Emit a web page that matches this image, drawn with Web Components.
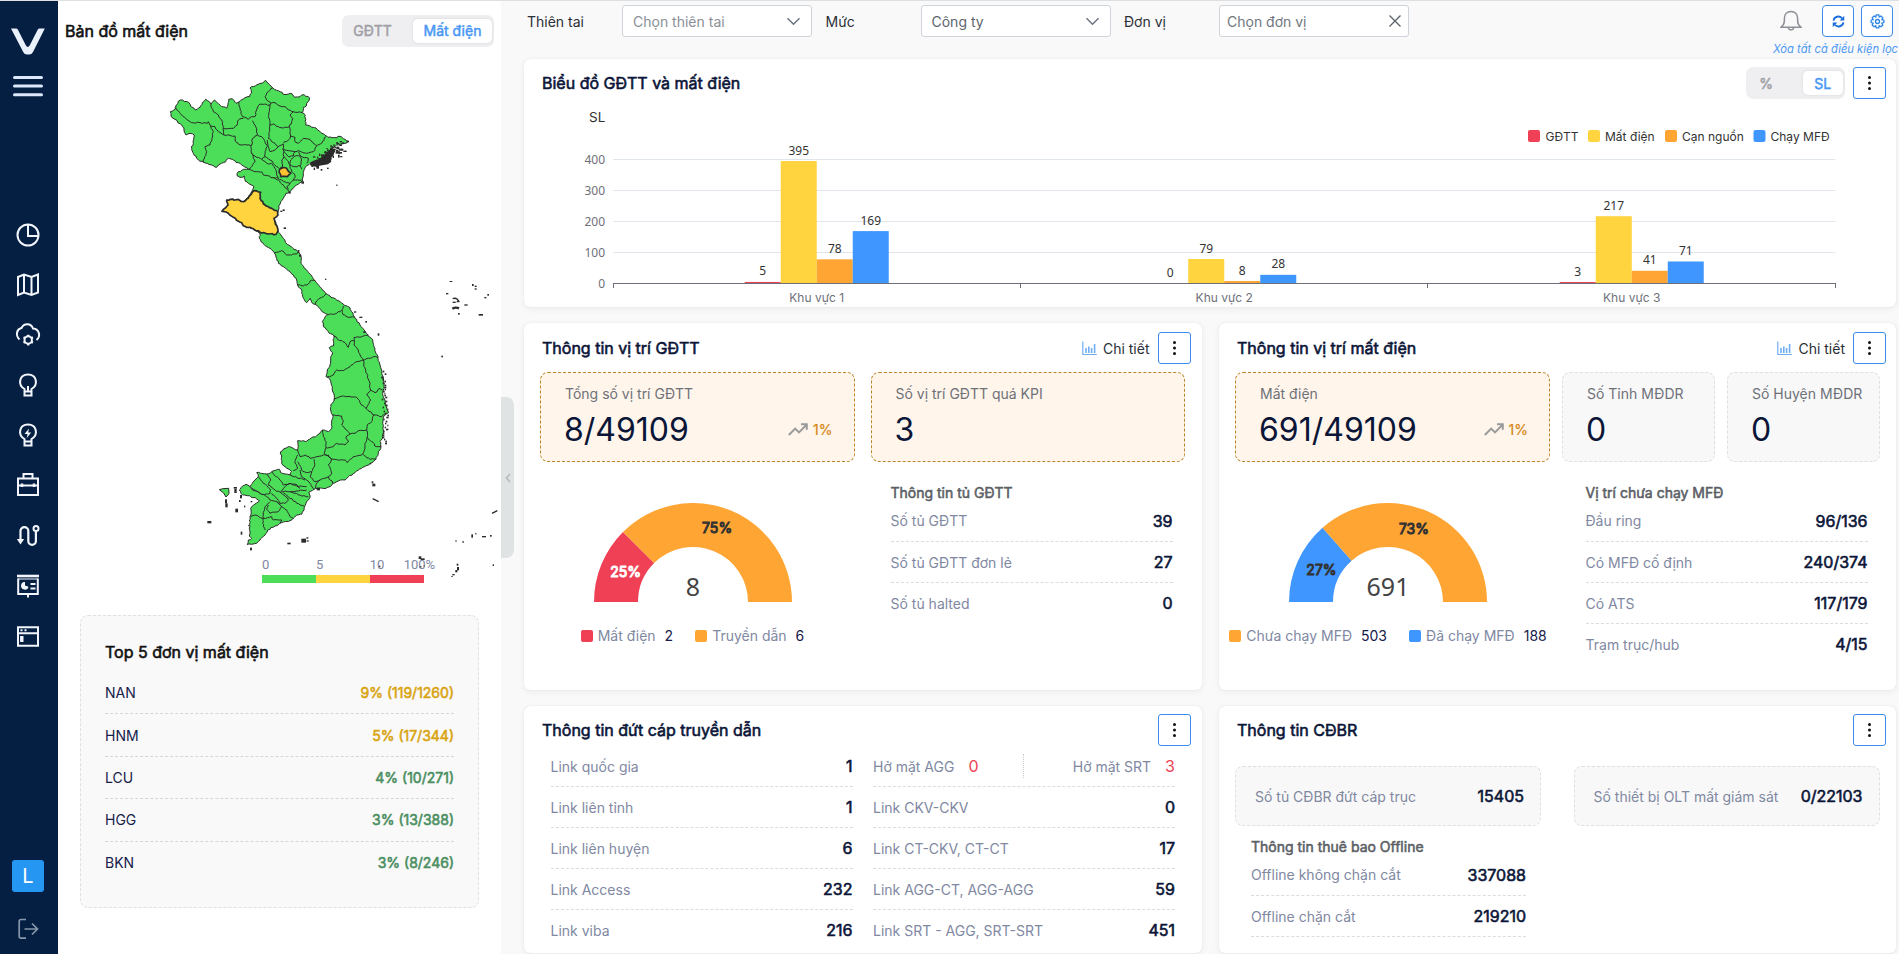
<!DOCTYPE html>
<html lang="vi">
<head>
<meta charset="utf-8">
<title>Dashboard</title>
<style>
html,body{margin:0;height:100%;overflow:hidden}
body{font-family:Inter,"Noto Sans",sans-serif;font-size:14px;color:#212529;background:#f9f9f9;font-optical-sizing:none}
</style>
</head>
<body>
<app-shell></app-shell>
<script>
const define = (name, css, html, after) => customElements.define(name, class extends HTMLElement {
  constructor(){ super(); this.attachShadow({mode:'open'}); }
  connectedCallback(){
    const a = n => this.getAttribute(n) ?? '';
    this.shadowRoot.innerHTML = `<style>:host{display:block;box-sizing:border-box}*{box-sizing:border-box}${css}</style>` + (typeof html === 'function' ? html(a, this) : html);
    if (after) after(this);
  }
});

/* ---------- small controls ---------- */
define('dots-button', `
  :host{width:33px;height:32px;flex:none;border:1px solid #3b8ce8;border-radius:3px;background:#fff;display:flex;align-items:center;justify-content:center}
  svg{display:block}`,
  `<svg width="5" height="16" viewBox="0 0 5 16" fill="#111"><circle cx="2.5" cy="2.4" r="1.5"/><circle cx="2.5" cy="8" r="1.5"/><circle cx="2.5" cy="13.6" r="1.5"/></svg>`);

define('seg-toggle', `
  :host{height:32px;flex:none;border-radius:7px;background:#efeff2;display:flex;padding:4px 2px 4px 0;font-size:14px;-webkit-text-stroke:.5px}
  span{display:flex;align-items:center;justify-content:center;height:24px}
  .off{color:#a0a0a5;flex:none}
  .on{flex:1;background:#fff;border-radius:5px;color:#4a98f5;box-shadow:0 0 3px rgba(0,0,0,.1)}`,
  a => `<span class="off" style="width:${a('off-width')}px;padding-right:${a('shift')}px">${a('off')}</span><span class="on">${a('on')}</span>`);

define('filter-field', `
  :host{display:flex;align-items:center;width:298.5px;flex:none}
  label{width:95px;flex:none;color:#2b2f36}
  div{width:190px;height:32px;border:1px solid #ced4da;border-radius:3px;background:#fff;display:flex;align-items:center;justify-content:space-between;padding:0 10px}
  .ph{color:#8b9098}.v{color:#5d646d}
  svg{display:block;flex:none}`,
  a => `<label>${a('label')}</label><div style="padding-left:${a('pad')||10}px;padding-right:${a('icon')==='x'?6:10}px"><span class="${a('value')?'v':'ph'}" style="${a('tone')?'color:'+a('tone'):''};padding-top:${a('value')?0:1}px">${a('value')||a('placeholder')}</span>${
    a('icon')==='x'
    ? `<svg width="14" height="14" viewBox="0 0 14 14" stroke="#5d646d" stroke-width="1.4"><path d="M1.5 1.5l11 11M12.5 1.5l-11 11"/></svg>`
    : `<svg width="15" height="9" viewBox="0 0 15 9" fill="none" stroke="#6b7480" stroke-width="1.5"><path d="M1.5 1.2l6 6 6-6"/></svg>`}</div>`);

define('icon-button', `
  :host{width:32px;height:32px;border:1px solid #3b8ce8;border-radius:4px;background:#fff;display:flex;align-items:center;justify-content:center}`,
  `<slot></slot>`);

define('data-row', `
  :host{display:flex;align-items:center;justify-content:space-between;height:41px;border-bottom:1px dashed #dcdcdc;color:#8088a2}
  :host([last]){border-bottom-color:transparent}
  b{font-weight:400;font-size:16px;color:#0b1537;-webkit-text-stroke:.6px}`,
  a => `<span>${a('label')}</span><b>${a('value')}</b>`);

define('rank-row', `
  :host{display:flex;align-items:center;justify-content:space-between;height:42.4px;border-bottom:1px dashed #d6d6d6;color:#16204a}
  :host([last]){border-bottom-color:transparent}
  b{font-weight:400;-webkit-text-stroke:.6px}`,
  a => `<span>${a('label')}</span><b style="color:${a('color')}">${a('value')}</b>`);

define('stat-box', `
  :host{height:90px;border:1px dashed #dfdfdf;border-radius:8px;background:#f8f8f8;padding:12px 21px 0 24px}
  :host([warm]){background:#fff5eb;border-color:#b9862a}
  p{margin:0;color:#6e7178;line-height:18px;white-space:nowrap}
  div{display:flex;justify-content:space-between;align-items:center;height:40px;margin-top:6px}
  .n{font-size:32px;color:#0b1537;margin-left:-1px}
  .t{display:flex;align-items:center;gap:5px;color:#d58512;-webkit-text-stroke:.2px;margin-top:1px}`,
  a => `<p>${a('label')}</p><div><span class="n">${a('value')}</span>${a('trend')?`<span class="t"><svg width="20" height="13" viewBox="0 0 20 13" fill="none" stroke="#9a9a9a" stroke-width="2"><path d="M.8 12l6.4-6.4 3.8 3.8 7.5-7.6M13 1.2h5.8v5.6"/></svg>${a('trend')}</span>`:''}</div>`);

define('detail-link', `
  :host{display:flex;align-items:center;gap:6px;color:#2b2f36}
  svg{display:block}`,
  `<svg width="15" height="15" viewBox="0 0 15 15" fill="none" stroke="#6fadf4" stroke-width="1.2"><path d="M.8 .5v13h14"/><path stroke-width="1.6" d="M4 12V7M6.800 12V5.500M9.600 12V7M12.600 12V3"/></svg><span>Chi tiết</span>`);

define('panel-card', `
  :host{background:#fff;border-radius:6px;box-shadow:0 2px 6px rgba(40,50,90,.06),0 0 1px rgba(40,50,90,.18)}
  header{display:flex;align-items:center;height:50px;padding:var(--head-pad,0) 11px var(--head-drop,0) 18px}
  h2{margin:0;flex:1;font-size:16px;font-weight:400;color:#0b1537;-webkit-text-stroke:.6px}
  dots-button{margin-right:var(--dots-shift,0)}
  ::slotted([slot=tools]){margin-right:8px}`,
  a => `<header><h2>${a('heading')}</h2><slot name="tools"></slot><dots-button></dots-button></header><slot></slot>`);

/* ---------- charts ---------- */
define('bar-chart', `svg{display:block}text{font-size:12px}.num{font-family:"Noto Sans",sans-serif}`, () => {
  const X0=613, W=407.5, Y0=283.5, K=.31;
  const colors=['#ef4056','#ffd43f','#ffa533','#3f96ff'];
  const groups=[[5,395,78,169],[0,79,8,28],[3,217,41,71]];
  let s='';
  for(let i=0;i<=4;i++){
    const y=Y0-i*31;
    if(i) s+=`<path d="M${X0} ${y}H1835.5" stroke="#e0e6ec"/>`;
    s+=`<text class="num" x="605" y="${y+4.5}" text-anchor="end" fill="#6e7079">${i*100}</text>`;
  }
  groups.forEach((g,i)=>{
    const c=X0+W*(i+.5);
    g.forEach((v,j)=>{
      const x=c-72+36*j, h=v?Math.max(v*K,1.5):0;
      s+=`<rect x="${x}" y="${Y0-h}" width="36" height="${h}" fill="${colors[j]}"/>`;
    });
    g.forEach((v,j)=>{
      s+=`<text class="num" x="${c-54+36*j}" y="${Y0-v*K-6.500}" text-anchor="middle" fill="#333">${v}</text>`;
    });
    s+=`<text x="${c}" y="302" text-anchor="middle" fill="#6e7079">Khu vực ${i+1}</text>`;
  });
  s+=`<path d="M${X0} ${Y0}H1835.5M613.5 283v5M1020.5 283v5M1427.5 283v5M1835.5 283v5" stroke="#6e7079" fill="none"/>`;
  s+=`<text x="589" y="122" style="font-size:13.5px" fill="#333">SL</text>`;
  [['GĐTT',1528,1545.5],['Mất điện',1588,1605],['Cạn nguồn',1665,1682],['Chạy MFĐ',1753.5,1770.5]].forEach(([t,x,tx],i)=>{
    s+=`<rect x="${x}" y="130" width="12" height="12" rx="2" fill="${colors[i]}"/><text x="${tx}" y="141" fill="#333">${t}</text>`;
  });
  return `<svg width="1372" height="197" viewBox="524 109 1372 197">${s}</svg>`;
});

define('half-donut', `
  svg{display:block;margin:0 auto}
  .p{font-size:14px;-webkit-text-stroke:.5px}.c{font-family:"Noto Sans",sans-serif;font-size:25px;fill:#444}`, a => {
  const [c1,c2]=a('colors').split(','), pct=+a('percent'), t=Math.PI*(1-pct/100), C=99;
  const pt=(r,ang)=>`${C+r*Math.cos(ang)} ${C-r*Math.sin(ang)}`;
  const seg=(a0,a1,f)=>`<path d="M${pt(99,a0)}A99 99 0 0 1 ${pt(99,a1)}L${pt(55,a1)}A55 55 0 0 0 ${pt(55,a0)}Z" fill="${f}"/>`;
  const m1=(Math.PI+t)/2, m2=t/2;
  return `<svg width="198" height="99" viewBox="0 0 198 99">${seg(Math.PI,t,c1)}${seg(t,0,c2)}
   <text class="p" text-anchor="middle" x="${C+73*Math.cos(m1)}" y="${C-75*Math.sin(m1)+4}" fill="${a('ink')}" stroke="${a('ink')}">${pct}%</text>
   <text class="p" text-anchor="middle" x="${C+63*Math.cos(m2)}" y="${C-84*Math.sin(m2)+9}" fill="#333" stroke="#333">${100-pct}%</text>
   <text class="c" text-anchor="middle" x="99" y="93">${a('total')}</text></svg>`;
});

define('color-legend', `
  :host{display:flex;justify-content:center;gap:22px}
  span{display:flex;align-items:center;color:#8088a2;white-space:nowrap}
  i{width:12px;height:12px;border-radius:2px;margin-right:5px}
  b{font-weight:400;color:#16204a;margin-left:9px}`,
  a => a('items').split(';').map(x=>{const [c,l,v]=x.split('|');return `<span><i style="background:${c}"></i>${l}<b>${v}</b></span>`}).join(''));

/* ---------- map of Vietnam ---------- */
define('country-map', `svg{display:block}text{font-family:Roboto,sans-serif;font-size:39px;fill:#8088a2}`, () => {
  const parse=s=>s.trim().split(/\s+/).map(p=>p.split(',').map(Number));
  let seed=7; const rnd=()=>{seed=(seed*16807)%2147483647;return seed/2147483647-.5};
  const rough=(s,close)=>{
    const p=parse(s); if(close) p.push(p[0]);
    let d=`M${p[0]}`;
    for(let i=1;i<p.length;i++){
      const [x0,y0]=p[i-1],[x1,y1]=p[i],L=Math.hypot(x1-x0,y1-y0),n=Math.max(1,Math.round(L/6));
      for(let k=1;k<n;k++){const t=k/n;d+=`L${(x0+(x1-x0)*t+rnd()*4).toFixed(1)} ${(y0+(y1-y0)*t+rnd()*4).toFixed(1)}`}
      d+=`L${x1} ${y1}`;
    }
    return d+(close?'Z':'');
  };
  const land=`511,335 528,325 527,318 541,300 566,307 572,319 586,330 600,322 607,308 617,298 628,305 633,312 644,300 652,308 665,320 680,325 686,298 697,296 708,310 716,306 735,293 749,290 754,280 750,264 767,257 787,250 797,241 808,254 818,264 835,272 855,284 876,281 884,292 900,290 912,284 925,290 928,300 920,310 919,318 910,322 907,338 916,345 917,375 930,378 948,384 960,395 975,406 984,412 1005,413 1020,409 1035,418 1044,424 1035,430 1010,435 1000,443 985,455 975,468 960,478 945,483 930,490 920,497 913,508 910,525 908,543 895,552 880,565 868,576 858,580 850,595 842,605 836,618 834,634 822,655 828,672 833,690 836,697 850,715 857,728 870,738 882,748 895,755 902,768 903,790 918,808 935,828 945,842 960,860 975,878 990,888 1010,900 1030,912 1045,920 1055,935 1065,955 1080,975 1095,995 1118,1020 1122,1040 1128,1060 1134,1075 1140,1095 1146,1115 1150,1145 1152,1165 1148,1180 1155,1200 1160,1225 1166,1238 1150,1250 1148,1270 1150,1290 1148,1310 1140,1325 1143,1340 1135,1360 1128,1378 1110,1390 1085,1405 1065,1418 1045,1430 1035,1440 1015,1443 998,1450 990,1460 975,1466 955,1465 942,1468 928,1475 930,1492 918,1510 912,1530 905,1543 890,1545 880,1555 870,1562 845,1568 825,1578 803,1590 795,1605 780,1620 770,1630 755,1633 742,1634 745,1620 755,1615 748,1608 750,1580 750,1550 755,1520 765,1512 778,1503 770,1497 752,1490 742,1487 728,1485 718,1470 728,1458 738,1453 750,1460 765,1440 775,1430 770,1418 785,1420 800,1422 815,1415 838,1408 842,1418 855,1422 870,1425 875,1415 870,1410 855,1400 845,1390 842,1355 855,1345 865,1340 880,1345 893,1350 893,1322 920,1324 935,1313 950,1308 968,1290 985,1295 995,1285 998,1245 992,1230 992,1215 1003,1200 1001,1180 997,1160 988,1135 978,1130 982,1110 990,1095 992,1075 998,1058 988,1043 1000,1038 1002,1008 985,995 970,980 967,965 975,950 985,944 965,934 950,915 940,912 930,895 920,908 908,890 905,868 893,855 890,840 880,825 860,808 835,790 830,775 823,758 810,745 800,740 788,728 778,715 780,700 745,680 700,650 684,615 730,605 745,590 755,575 762,560 750,553 735,543 733,528 720,532 711,527 715,515 735,508 745,508 730,498 715,488 700,480 685,475 670,488 655,495 650,502 635,495 610,487 600,484 590,475 580,460 575,445 580,430 583,405 570,400 558,405 552,390 545,375 525,358 513,348`;
  const borders=[
  '525,322 545,345 560,358 575,368 600,368 622,370 625,365 632,378 640,395 636,415 630,435 615,440 620,455 610,487',
  '633,312 636,325 640,335 655,345 665,360 670,380 672,405','632,378 645,380 655,395 672,405 705,408',
  '670,385 700,385 712,375 715,360 730,355','716,306 720,330 728,350 735,352','735,352 745,358 755,350 765,350 770,330 780,312','757,362 765,375 770,390 772,405',
  '705,408 705,420 715,432 740,435 755,435','755,435 758,415 772,405 785,410','818,264 805,275 795,290 800,300 812,310 825,308','780,312 810,315 812,310',
  '810,315 808,335 805,350 810,370 808,395 805,415','825,308 840,318 855,320 865,330 880,335','880,335 907,338','880,335 870,345 878,355 875,365 868,380',
  '808,375 820,372 835,380 850,384 868,380','868,380 870,395 872,408 865,420 850,430','872,408 885,412 885,425 895,430 910,415 930,418 940,430 950,438','950,438 965,430 978,410',
  '805,415 815,425 825,430 835,440 850,432','850,432 848,448 870,452 885,455 895,452 920,460 940,455 950,438','785,410 795,425 802,440 795,455 795,470 785,478 770,472 755,460 752,440 755,435',
  '802,420 805,440 810,455 825,450 835,440','795,470 810,480 820,490 830,500 840,508','850,450 852,470 845,480 848,495 840,508','852,455 865,470 880,468 885,455',
  '885,468 872,480 870,495 885,500 900,498 905,480 900,468 885,468','905,470 925,475 920,490','900,498 905,508','895,455 905,470','852,470 865,485 870,500',
  '870,500 875,515 885,525 880,540 905,540','880,540 870,550 860,560 868,576','820,533 835,540 850,555 862,568','755,460 760,475 765,485 755,500 745,508 770,515 785,515 790,525 820,533 835,535 860,548 870,550',
  '785,478 800,490 815,490 825,505 830,525 835,535','823,758 845,752 860,765 875,765 890,762 895,755','893,855 910,858 925,852 930,843 945,842','945,912 955,898 970,890 978,880',
  '985,944 1010,940 1025,930 1030,918','1025,930 1030,945 1050,952 1062,952','1002,1008 1015,1020 1035,1028 1045,1042 1050,1025 1062,1022',
  '1062,1035 1062,1012 1085,1010 1105,1005','1062,1035 1075,1050 1080,1065 1090,1080 1105,1075 1120,1070 1134,1073','982,1130 1000,1125 1010,1110 1030,1112 1050,1100 1070,1085 1090,1080',
  '1090,1080 1092,1100 1100,1120 1108,1145 1112,1170','1112,1170 1125,1178 1140,1165 1148,1170','1112,1170 1100,1185 1112,1200 1098,1225','1001,1198 1020,1190 1050,1190 1070,1192 1080,1208 1098,1225 1110,1235 1122,1245',
  '1122,1245 1145,1250 1160,1240','1122,1245 1115,1265 1102,1275 1100,1290','998,1245 1025,1248 1030,1262 1025,1275 1040,1290 1050,1302 1065,1300 1075,1292 1100,1290',
  '1050,1302 1038,1310 1045,1325 1035,1335 1010,1330 1000,1340 978,1343','968,1290 970,1310 978,1325 978,1343 972,1360 995,1377','1100,1290 1102,1310 1095,1330 1095,1345 1088,1362',
  '1102,1312 1115,1325 1130,1340 1143,1340','995,1377 1035,1380 1042,1388 1060,1370 1088,1362 1110,1378 1128,1378','893,1350 900,1370 915,1365 930,1375 950,1370 970,1365 985,1365 995,1377',
  '943,1378 943,1400 935,1415','995,1377 985,1395 995,1420 985,1430 960,1440 945,1445','985,1430 998,1450','960,1440 950,1450 945,1465','893,1365 885,1385 893,1405 880,1412',
  '893,1385 905,1410 920,1418 935,1415','900,1410 905,1430 920,1440 930,1450 942,1468','935,1415 930,1430 945,1445','870,1425 900,1435 915,1440','815,1415 830,1430 845,1445 850,1455 870,1450 890,1458 920,1460',
  '800,1422 812,1440 805,1455 825,1470 842,1478 850,1465','845,1475 870,1475 920,1470','850,1465 865,1452 885,1452 900,1465','870,1475 900,1485 925,1490','850,1478 870,1495 890,1510 912,1518',
  '775,1430 790,1450 812,1470 810,1480 785,1483 765,1470 750,1460','785,1483 800,1490 810,1500 830,1505 845,1520','815,1480 830,1495 840,1510','842,1478 865,1500 855,1510 840,1510','752,1465 785,1483','810,1505 795,1520 790,1545 790,1555',
  '830,1505 845,1520 835,1535 810,1540 800,1528 805,1515','845,1520 860,1530 870,1550 880,1555','790,1555 815,1550 820,1560 845,1560 840,1570','790,1555 788,1570 795,1590','752,1550 765,1545 790,1555'];
  const nghean='666,634 684,615 680,600 715,598 730,605 745,595 755,580 762,572 782,577 780,595 795,615 815,625 834,636 834,645 822,655 826,672 834,690 828,703 805,702 780,697 755,685 730,677 725,668 700,652 685,640';
  const hanam='838,510 848,503 860,505 873,520 862,530 842,530';
  // islands: x,y,w,h in map units
  const isl='1008,554,5,3 975,836,4,4 848,628,6,5 841,632,6,4 851,682,7,5 1349,843,8,3 1416,852,5,6 1424,857,6,4 1424,865,6,4 1338,879,7,4 1462,882,5,5 1453,891,6,4 1393,913,10,4 1358,905,9,4 1374,939,5,5 1436,942,13,5 1324,1067,5,5 1078,950,9,4 1096,963,5,5 1133,1000,5,7 1090,994,8,5 894,750,4,8 897,764,7,6 1062,934,7,4 866,574,6,7 904,544,8,7 1115,1444,5,6 1117,1451,9,8 675,1498,6,12 676,1510,7,12 701,1461,10,5 703,1467,7,12 720,1485,6,10 717,1500,5,6 732,1517,4,5 706,1526,8,11 622,1563,12,7 722,1595,5,9 750,1643,6,8 862,1628,10,5 904,1616,14,12 919,1612,6,4 920,1621,6,4 745,1575,3,4 752,1503,5,4 950,1463,10,8 1109,1389,5,4 1366,1621,4,4 1387,1624,5,4 1414,1603,5,10 1425,1600,5,3 1446,1608,12,4 1470,1605,5,5 1256,1669,8,8 1262,1675,12,5 1258,1698,6,5 1137,1697,4,5 1271,1695,4,5 1478,1693,4,5 1370,1691,5,6 1371,1701,6,10 1366,1710,6,7 1357,1722,7,4 1354,1728,4,3 1030,452,8,4 1036,452,4,4 1016,456,10,5 1014,464,5,9 1021,468,6,4 962,507,5,5 981,503,5,4 1040,422,7,5 1148,1112,5,5 1154,1120,5,5'.split(' ').map(r=>{const [x,y,w,h]=r.split(',');return `<rect x="${x}" y="${y}" width="${w}" height="${h}"/>`}).join('');
  let specks='';
  for(let i=0;i<34;i++){const y=1130+i*6;const x=1150+(y>1220&&y<1290?6:0)+rnd()*14;specks+=`<rect x="${x.toFixed()}" y="${y}" width="${(5+rnd()*4).toFixed()}" height="5"/>`}
  for(let i=0;i<60;i++){const t=i/60;specks+=`<rect x="${(932+t*90+rnd()*16).toFixed()}" y="${(494-t*62+rnd()*32).toFixed()}" width="${(6+rnd()*6).toFixed()}" height="${(5+rnd()*5).toFixed()}"/>`}
  return `<svg width="443" height="540" viewBox="174 180 1329 1620">
   <g stroke="#2b2b2b" stroke-width="3" fill="none" stroke-linejoin="round">
    <path fill="#4cde58" d="${rough(land,1)}"/>
    <path d="${borders.map(b=>rough(b)).join('')}"/>
    <path fill="#ffd43f" stroke-width="5" d="${rough(nghean,1)}"/>
    <path fill="#ffc233" stroke-width="5" d="${rough(hanam,1)}"/>
    <path fill="#4cde58" d="M658 1469l10-3 18-1 1 16-9 10-7-12z"/>
   </g>
   <path fill="#2b2b2b" d="M932 486l20-5 16-12 14-14 12-10 12 2-6 20-8 8 2 10-10 8-18 3-20 4-16-4z"/>
   <g fill="#2b2b2b">${isl}${specks}</g>
   <g fill="none" stroke="#2b2b2b" stroke-width="4"><path d="M1358 896q8-3 14 2t-2 8M1372 898l6 8M1118 1496l18 9M1476 1540l16-8"/><path stroke-width="7" d="M1357 926q10-6 20-1"/></g>
   <rect x="786" y="1725" width="162" height="24" fill="#4cde58"/><rect x="948" y="1725" width="162" height="24" fill="#ffd43f"/><rect x="1110" y="1725" width="162" height="24" fill="#ef4056"/>
   <text x="786" y="1707">0</text><text x="948" y="1707">5</text><text x="1109" y="1707">10</text><text x="1211" y="1707">100%</text>
  </svg>`;
});

/* ---------- sidebar ---------- */
define('side-nav', `
  :host{width:58px;height:100%;background:#051f42;display:flex;flex-direction:column;align-items:center;padding:24px 2px 0 0}
  svg{display:block;overflow:visible}
  .nav{display:flex;flex-direction:column;align-items:center;gap:26.1px;margin-top:125px;height:426px}
  .nav svg{width:24px;height:24px;flex:none}
  .ava{width:32px;height:32px;border-radius:3px;background:#2597f3;color:#fff;font-size:20px;display:flex;align-items:center;justify-content:center;margin-top:211px}
  .out{margin-top:26px}`,
  `<svg width="34" height="30" viewBox="0 0 34 30"><path d="M0 3.500h5q1.200 0 1.800 1.100l8 15.600q2 3.600 4 0l8-15.600q.6-1.100 1.800-1.100h5.200L22 27q-1.200 2.600-4 2.600h-1.800q-2.800 0-4-2.600z" fill="#eaf1fb"/></svg>
   <svg width="30" height="22" viewBox="0 0 30 22" style="margin-top:21px" stroke="#dde8fa" stroke-width="3" stroke-linecap="round"><path d="M1.500 1.500h27M1.500 10h27M1.500 18.800h27"/></svg>
   <div class="nav">
    <svg viewBox="0 0 24 24" fill="none" stroke="#f2f6fc" stroke-width="2"><circle cx="12" cy="12" r="10.500"/><path d="M12 1.500V13h10.500"/></svg>
    <svg viewBox="0 0 24 24" fill="none" stroke="#f2f6fc" stroke-width="2"><path d="M2 4l6-2.500 7.500 2.500 6.500-2.500v18L15.500 22 8 19.500 2 22zM8 1.500v18M15.500 4v18"/></svg>
    <svg viewBox="0 0 24 24" fill="none" stroke="#f2f6fc" stroke-width="2"><path d="M3.500 16.500C-1 12 .8 6 5.500 5 8 -.2 15 -.2 17 5.500c6.500 .5 8 8 3.500 11.500"/><circle cx="12.200" cy="17" r="3.700"/><path stroke-width="2.200" d="M12.200 11.700v2M12.200 20.600v2M7.500 14.300l1.700 1M15.200 18.700l1.700 1M7.500 19.700l1.700-1M15.200 15.300l1.700-1"/></svg>
    <svg viewBox="0 0 24 24" fill="none" stroke="#f2f6fc" stroke-width="2"><path d="M8.500 18.500v-2.500C1.500 12 3 1.500 12 1.500S22.500 12 15.500 16v2.500z M8.500 18v4.500h7V18M12 13v5.500"/></svg>
    <svg viewBox="0 0 24 24" fill="none" stroke="#f2f6fc" stroke-width="2"><path d="M8.500 18.500v-2.500C1.500 12 3 1.500 12 1.500S22.500 12 15.500 16v2.500z M8.500 18v4.500h7V18"/><path d="M13 5.500l-4.500 5.500h3l-.8 4 4.500-5.500h-3z" fill="#f2f6fc" stroke="none"/></svg>
    <svg viewBox="0 0 24 24" fill="none" stroke="#f2f6fc" stroke-width="2"><path d="M2 5.500h20v16.500H2zM7.500 5V1h9v4M2 12.500h20"/><path d="M6 10.500v3.500M18 10.500v3.500" stroke-width="2.600"/></svg>
    <svg viewBox="0 0 24 24" fill="none" stroke="#f2f6fc" stroke-width="2.200"><path d="M4.500 16V7a3.900 3.900 0 0 1 7.800 0v10a3.800 3.800 0 0 0 7.600 0V7.500"/><circle cx="20" cy="4.500" r="2.500" stroke-width="2"/><path d="M.8 15h7.400L4.500 20.500z" fill="#f2f6fc" stroke="none"/></svg>
    <svg viewBox="0 0 24 24" fill="none" stroke="#f2f6fc" stroke-width="2"><path d="M1 2h22" stroke-width="2.600"/><path d="M2.200 4.500V20h19.600V4.500M12 20v3.500"/><path d="M2 5h20" stroke-width="1"/><path d="M14.500 10h5M14.500 14.500h5" stroke-width="2.200"/><path d="M9 8a3.800 3.800 0 1 0 3.500 4.700L9 11.500z" fill="#f2f6fc" stroke="none"/></svg>
    <svg viewBox="0 0 24 24" fill="none" stroke="#f2f6fc" stroke-width="2"><path d="M2 3.200h20v18.500H2zM2 9.200h20"/><path d="M4.500 6.200h2M8.500 6.200h2" stroke-width="2"/><path d="M5.800 12v6" stroke-width="3.400"/></svg>
   </div>
   <div class="ava">L</div>
   <svg class="out" width="21" height="22" viewBox="0 0 21 22" fill="none" stroke="#8796ab" stroke-width="1.700"><path d="M8 1.500H3q-1.800 0-1.800 1.800v15q0 1.800 1.800 1.800h5M6.500 11h13M14 5.500l5.500 5.500-5.500 5.500"/></svg>`);

/* ---------- page ---------- */
define('map-panel', `
  :host{width:443px;height:100%;background:#fff}
  header{display:flex;align-items:center;justify-content:space-between;height:59px;padding:0 7px 0 7px}
  h1{margin:0;font-size:16px;font-weight:400;color:#111;-webkit-text-stroke:.6px}
  .top{margin:15px 22px 0;height:293px;border:1px dashed #e0e0e0;border-radius:8px;background:#f9f9f9;padding:24px}
  h3{margin:0 0 8px;font-size:16px;line-height:24px;font-weight:400;color:#111;-webkit-text-stroke:.6px}`,
  `<header><h1>Bản đồ mất điện</h1><seg-toggle style="width:152px" off="GĐTT" on="Mất điện" off-width="71" shift="10"></seg-toggle></header>
   <country-map></country-map>
   <div class="top"><h3>Top 5 đơn vị mất điện</h3><div class="rows">
    <rank-row label="NAN" value="9% (119/1260)" color="#d9a514"></rank-row>
    <rank-row label="HNM" value="5% (17/344)" color="#d9a514"></rank-row>
    <rank-row label="LCU" value="4% (10/271)" color="#4c8f62"></rank-row>
    <rank-row label="HGG" value="3% (13/388)" color="#4c8f62"></rank-row>
    <rank-row last label="BKN" value="3% (8/246)" color="#4c8f62"></rank-row></div></div>`);

define('filter-bar', `
  :host{height:58px;display:flex;padding:4px 3px 0 3px;align-items:flex-start}
  .right{margin-left:auto;text-align:right}
  .btns{display:flex;gap:7px;align-items:center;justify-content:flex-end}
  .bell{margin-right:13px}
  svg{display:block}
  p{margin:4px -5px 0 0;font-size:11.200px;line-height:16px;font-style:italic;color:#4b98f4;white-space:nowrap}`,
  `<filter-field label="Thiên tai" placeholder="Chọn thiên tai"></filter-field>
   <filter-field label="Mức" value="Công ty"></filter-field>
   <filter-field label="Đơn vị" placeholder="Chọn đơn vị" icon="x" pad="7" tone="#70767e"></filter-field>
   <div class="right"><div class="btns">
    <svg class="bell" width="22" height="22" viewBox="0 0 22 22" fill="none" stroke="#8d9197" stroke-width="1.500"><path d="M1.200 17.200h19.600c-2.400-1.900-3.200-3.700-3.200-6.700V8.300C17.600 4 14.800 1.500 11 1.500S4.400 4 4.400 8.300v2.200c0 3-.8 4.800-3.200 6.700zM8.200 17.800a2.900 2.900 0 0 0 5.600 0"/></svg>
    <icon-button><svg width="13" height="13" viewBox="0 0 14 14" fill="none" stroke="#1b6fdc" stroke-width="2"><path d="M1.600 6a5.300 5.300 0 0 1 9.200-2.500M12.400 8a5.300 5.300 0 0 1-9.200 2.500"/><path d="M13.200 .8v5H8.200zM.8 13.200v-5h5z" fill="#1b6fdc" stroke="none"/></svg></icon-button>
    <icon-button><svg width="15" height="15" viewBox="0 0 24 24" fill="none" stroke="#2b85e8" stroke-width="2.100"><circle cx="12" cy="12" r="3.200"/><path d="M10 1.500h4l.8 3.200 2.800-1.500 2.900 2.900-1.500 2.800 3.200.9v4l-3.200.9 1.500 2.900-2.900 2.800-2.800-1.500-.8 3.300h-4l-.8-3.300-2.800 1.500L3.500 17.600 5 14.700l-3.200-.9v-4L5 8.900 3.500 6.100l2.900-2.900 2.800 1.500z"/></svg></icon-button>
   </div><p>Xóa tất cả điều kiện lọc</p></div>`);

define('app-shell', `
  :host{display:flex;width:1899px;height:954px;border-top:1px solid #dedfe1;background:#f9f9f9;overflow:hidden}
  side-nav,map-panel{flex:none}
  .handle{width:13px;height:161px;margin-top:396px;flex:none;background:#dfe3e4;border-radius:0 8px 8px 0;display:flex;align-items:center;justify-content:center}
  main{margin-left:10px;width:1372px;flex:none}
  .grid{display:grid;grid-template-columns:677.5px 677px;column-gap:17.500px;grid-template-rows:367px 247px;row-gap:16px;margin-top:16px}
  .chart{height:248px}
  .chart,.late{--head-drop:2px}
  .edge{--dots-shift:-1px}
  .stats{display:grid;column-gap:16px;padding:0 16px;margin-top:-1px}
  .body{display:flex}
  .donut{width:305px;padding-top:41px;flex:none}
  color-legend{margin-top:25px}
  h4{margin:0;font-size:14px;font-weight:400;line-height:20px;color:#5c5f66;-webkit-text-stroke:.55px}
  .info{width:282px;padding-top:21px}
  .info data-row:first-of-type,.off data-row:first-of-type{height:39px;padding-bottom:3px}
  .two{display:grid;grid-template-columns:302px 302px;column-gap:20.500px;padding-left:26.500px;margin-top:-10px}
  .open{display:flex;align-items:center;justify-content:space-between;height:41px;border-bottom:1px dashed #dcdcdc;color:#8088a2}
  .open b{font-weight:400;font-size:16px;color:#ef4056;margin-left:14px}
  .open .bar{height:24px;border-left:1px dotted #ccc;margin-right:4px}
  .open span{display:flex;align-items:center}
  .boxes{display:grid;grid-template-columns:306px 306px;column-gap:32.500px;padding:10px 16px 0}
  .boxes div{height:60px;border:1px dashed #dfdfdf;border-radius:8px;background:#f8f8f8;padding:0 16px 0 19px}
  .boxes data-row{height:58px;border:0}
  .off{width:275px;margin:11px 0 0 32px}`,
  `<side-nav></side-nav><map-panel></map-panel>
  <div class="handle"><svg width="6" height="10" viewBox="0 0 6 10" fill="none" stroke="#b4babd" stroke-width="1.600"><path d="M5 1L1.500 5 5 9"/></svg></div>
  <main>
   <filter-bar></filter-bar>
   <panel-card class="chart edge" heading="Biểu đồ GĐTT và mất điện"><seg-toggle slot="tools" style="width:99.500px" off="%" on="SL" off-width="57" shift="16"></seg-toggle><bar-chart></bar-chart></panel-card>
   <div class="grid">
    <panel-card heading="Thông tin vị trí GĐTT"><detail-link slot="tools"></detail-link>
     <div class="stats" style="grid-template-columns:314.500px 314.500px"><stat-box warm label="Tổng số vị trí GĐTT" value="8/49109" trend="1%"></stat-box><stat-box warm label="Số vị trí GĐTT quá KPI" value="3"></stat-box></div>
     <div class="body"><div class="donut" style="margin-left:16px"><half-donut colors="#ef4056,#ffa533" percent="25" total="8" ink="#fff"></half-donut><color-legend items="#ef4056|Mất điện|2;#ffa533|Truyền dẫn|6"></color-legend></div>
      <div class="info" style="margin-left:45.500px"><h4>Thông tin tủ GĐTT</h4><data-row label="Số tủ GĐTT" value="39"></data-row><data-row label="Số tủ GĐTT đơn lẻ" value="27"></data-row><data-row last label="Số tủ halted" value="0"></data-row></div></div>
    </panel-card>
    <panel-card class="edge" heading="Thông tin vị trí mất điện"><detail-link slot="tools"></detail-link>
     <div class="stats" style="grid-template-columns:315px 153px 153px;column-gap:12px"><stat-box warm label="Mất điện" value="691/49109" trend="1%"></stat-box><stat-box label="Số Tỉnh MĐDR" value="0"></stat-box><stat-box label="Số Huyện MĐDR" value="0"></stat-box></div>
     <div class="body"><div class="donut" style="margin-left:12px;width:314px"><half-donut colors="#3f96ff,#ffa533" percent="27" total="691" ink="#333"></half-donut><color-legend items="#ffa533|Chưa chạy MFĐ|503;#3f96ff|Đã chạy MFĐ|188"></color-legend></div>
      <div class="info" style="margin-left:40.500px"><h4>Vị trí chưa chạy MFĐ</h4><data-row label="Đầu ring" value="96/136"></data-row><data-row label="Có MFĐ cố định" value="240/374"></data-row><data-row label="Có ATS" value="117/179"></data-row><data-row last label="Trạm trục/hub" value="4/15"></data-row></div></div>
    </panel-card>
    <panel-card class="late" heading="Thông tin đứt cáp truyền dẫn">
     <div class="two"><div><data-row label="Link quốc gia" value="1"></data-row><data-row label="Link liên tỉnh" value="1"></data-row><data-row label="Link liên huyện" value="6"></data-row><data-row label="Link Access" value="232"></data-row><data-row last label="Link viba" value="216"></data-row></div>
      <div><div class="open"><span>Hở mặt AGG<b>0</b></span><i class="bar"></i><span>Hở mặt SRT<b>3</b></span></div><data-row label="Link CKV-CKV" value="0"></data-row><data-row label="Link CT-CKV, CT-CT" value="17"></data-row><data-row label="Link AGG-CT, AGG-AGG" value="59"></data-row><data-row last label="Link SRT - AGG, SRT-SRT" value="451"></data-row></div></div>
    </panel-card>
    <panel-card class="late edge" heading="Thông tin CĐBR">
     <div class="boxes"><div><data-row label="Số tủ CĐBR đứt cáp trục" value="15405"></data-row></div><div><data-row label="Số thiết bị OLT mất giám sát" value="0/22103"></data-row></div></div>
     <div class="off"><h4>Thông tin thuê bao Offline</h4><data-row label="Offline không chặn cắt" value="337088"></data-row><data-row label="Offline chặn cắt" value="219210"></data-row></div>
    </panel-card>
   </div>
  </main>`);
</script>
</body>
</html>
